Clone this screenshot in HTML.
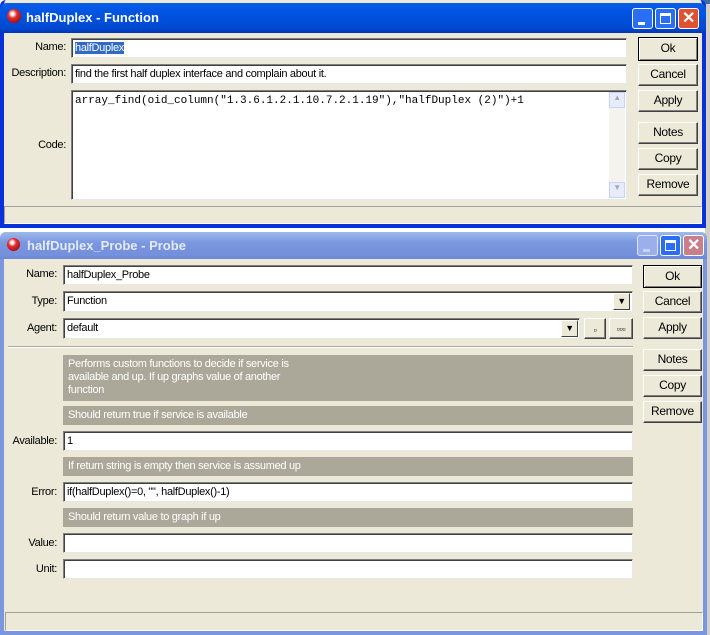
<!DOCTYPE html>
<html><head><meta charset="utf-8"><style>
*{box-sizing:border-box;margin:0;padding:0}
body{width:710px;height:635px;overflow:hidden;background:#fff;font-family:"Liberation Sans",sans-serif;font-size:11px;position:relative;letter-spacing:-0.3px}
.a{position:absolute}
.win{position:absolute;background:#ece9d8}
.field{position:absolute;background:#fff;border-top:1px solid #7f7f7f;border-left:1px solid #7f7f7f;border-bottom:1px solid #e8e8e8;border-right:1px solid #e8e8e8;box-shadow:inset 1px 1px 0 #404040;padding:3px 3px 0;line-height:13px;white-space:nowrap;overflow:hidden;color:#000}
.lbl{position:absolute;text-align:right;color:#000}
.btn{position:absolute;background:#ece9d8;border:1px solid #fff;border-right-color:#404040;border-bottom-color:#404040;box-shadow:inset -1px -1px 0 #808080;text-align:center;font-size:12px}
.gray{position:absolute;background:#aca899;color:#fff;padding:3px 5px;font-size:11px;line-height:13px}
.tb{position:absolute;border-radius:3px;border:1px solid #fff}
.status{position:absolute;border:1px solid #a0a0a0;border-right-color:#fff;border-bottom-color:#fff}
</style></head><body>
<div class="a" style="left:705px;top:0;width:5px;height:635px;background:#d4d0c8"></div>
<div class="a" style="left:350px;top:0;width:360px;height:4px;background:#3a6ea5"></div>

<!-- Window 1 -->
<div class="win" style="left:0;top:0;width:706px;height:228px;border:4px solid #0831d9;border-top:none;border-radius:6px 6px 0 0"></div>
<div class="a" style="left:0;top:3px;width:706px;height:30px;background:linear-gradient(#0a5fe8,#0054e3 30%,#0049d0 85%,#0036b0);border-radius:7px 7px 0 0"></div>
<div class="a" style="left:7px;top:9px;width:14px;height:14px;border-radius:50%;background:radial-gradient(circle at 40% 35%,#fff 10%,#e03030 35%,#900 90%)"></div>
<div class="a" style="left:26px;top:10px;color:#fff;font-weight:bold;font-size:13px;letter-spacing:0">halfDuplex - Function</div>
<div class="tb" style="left:632px;top:8px;width:21px;height:21px;background:#2a6ef5"><div class="a" style="left:5px;top:13px;width:7px;height:3px;background:#fff"></div></div>
<div class="tb" style="left:655px;top:8px;width:21px;height:21px;background:#2a6ef5"><div class="a" style="left:4px;top:4px;width:11px;height:11px;border:1px solid #fff;border-top-width:3px"></div></div>
<div class="tb" style="left:678px;top:8px;width:21px;height:21px;background:#e0522f;color:#fff;font-size:16px;font-weight:bold;text-align:center;line-height:19px">✕</div>

<div class="lbl" style="left:0;top:41px;width:66px">Name:</div>
<div class="field" style="left:71px;top:38px;width:556px;height:20px"><span style="background:#316ac5;color:#fff">halfDuplex</span></div>
<div class="lbl" style="left:0;top:67px;width:66px">Description:</div>
<div class="field" style="left:71px;top:64px;width:556px;height:20px">find the first half duplex interface and complain about it.</div>
<div class="lbl" style="left:0;top:139px;width:66px">Code:</div>
<div class="field" style="left:71px;top:90px;width:556px;height:110px;font-family:'Liberation Mono',monospace;font-size:11px;letter-spacing:0;padding-top:4px">array_find(oid_column("1.3.6.1.2.1.10.7.2.1.19"),"halfDuplex (2)")+1</div>
<div class="a" style="left:609px;top:92px;width:16px;height:106px;background:#f4f3ee"></div>
<div class="a" style="left:609px;top:92px;width:16px;height:16px;background:#e8ecf8;border:1px solid #c3d3fd;color:#a0a8c0;font-size:8px;text-align:center">▲</div>
<div class="a" style="left:609px;top:182px;width:16px;height:16px;background:#e8ecf8;border:1px solid #c3d3fd;color:#a0a8c0;font-size:8px;text-align:center">▼</div>

<div class="btn" style="left:638px;top:37px;width:60px;height:24px;line-height:21px;border:1px solid #000;box-shadow:inset 1px 1px 0 #fff,inset -1px -1px 0 #808080">Ok</div>
<div class="btn" style="left:638px;top:64px;width:60px;height:22px;line-height:19px">Cancel</div>
<div class="btn" style="left:638px;top:90px;width:60px;height:22px;line-height:19px">Apply</div>
<div class="btn" style="left:638px;top:122px;width:60px;height:22px;line-height:19px">Notes</div>
<div class="btn" style="left:638px;top:148px;width:60px;height:22px;line-height:19px">Copy</div>
<div class="btn" style="left:638px;top:174px;width:60px;height:22px;line-height:19px">Remove</div>
<div class="status" style="left:4px;top:206px;width:698px;height:18px"></div>

<!-- Window 2 -->
<div class="win" style="left:0;top:232px;width:707px;height:403px;border:4px solid #7a96df;border-top:none;border-radius:6px 6px 0 0"></div>
<div class="a" style="left:0;top:232px;width:707px;height:27px;background:linear-gradient(#9db9eb,#7a96df 40%,#7590dc 85%,#6b86d6);border-radius:7px 7px 0 0"></div>
<div class="a" style="left:7px;top:238px;width:13px;height:13px;border-radius:50%;background:radial-gradient(circle at 40% 35%,#fff 10%,#e03030 35%,#900 90%)"></div>
<div class="a" style="left:27px;top:238px;color:#e4eaf8;font-weight:bold;font-size:13px;letter-spacing:0">halfDuplex_Probe - Probe</div>
<div class="tb" style="left:637px;top:235px;width:21px;height:21px;background:#9bb0ea;border-color:#dbe4f8"><div class="a" style="left:5px;top:13px;width:7px;height:3px;background:#c8d4f4"></div></div>
<div class="tb" style="left:660px;top:235px;width:21px;height:21px;background:#2a6ef5"><div class="a" style="left:4px;top:4px;width:11px;height:11px;border:1px solid #fff;border-top-width:3px"></div></div>
<div class="tb" style="left:683px;top:235px;width:21px;height:21px;background:#c87f8c;color:#fff;font-size:16px;font-weight:bold;text-align:center;line-height:19px">✕</div>

<div class="lbl" style="left:0;top:268px;width:57px">Name:</div>
<div class="field" style="left:63px;top:265px;width:570px;height:20px">halfDuplex_Probe</div>
<div class="lbl" style="left:0;top:295px;width:57px">Type:</div>
<div class="field" style="left:63px;top:291px;width:570px;height:21px">Function</div>
<div class="a" style="left:613px;top:293px;width:17px;height:17px;background:#ece9d8;border:1px solid #fff;border-right-color:#404040;border-bottom-color:#404040;font-size:9px;text-align:center;line-height:15px">▼</div>
<div class="lbl" style="left:0;top:322px;width:57px">Agent:</div>
<div class="field" style="left:63px;top:318px;width:517px;height:21px">default</div>
<div class="a" style="left:561px;top:320px;width:17px;height:17px;background:#ece9d8;border:1px solid #fff;border-right-color:#404040;border-bottom-color:#404040;font-size:9px;text-align:center;line-height:15px">▼</div>
<div class="btn" style="left:584px;top:318px;width:22px;height:21px;font-size:9px;line-height:22px">▫</div>
<div class="btn" style="left:609px;top:318px;width:24px;height:21px;font-size:9px;line-height:20px;font-weight:bold">▫▫▫</div>
<div class="a" style="left:8px;top:346px;width:625px;height:2px;border-top:1px solid #aca899;border-bottom:1px solid #fff"></div>

<div class="gray" style="left:63px;top:355px;width:570px;height:46px">Performs custom functions to decide if service is<br>available and up. If up graphs value of another<br>function</div>
<div class="gray" style="left:63px;top:406px;width:570px;height:19px">Should return true if service is available</div>
<div class="lbl" style="left:0;top:435px;width:57px">Available:</div>
<div class="field" style="left:63px;top:431px;width:570px;height:20px">1</div>
<div class="gray" style="left:63px;top:457px;width:570px;height:19px">If return string is empty then service is assumed up</div>
<div class="lbl" style="left:0;top:486px;width:57px">Error:</div>
<div class="field" style="left:63px;top:482px;width:570px;height:20px">if(halfDuplex()=0, "", halfDuplex()-1)</div>
<div class="gray" style="left:63px;top:508px;width:570px;height:19px">Should return value to graph if up</div>
<div class="lbl" style="left:0;top:537px;width:57px">Value:</div>
<div class="field" style="left:63px;top:533px;width:570px;height:20px"></div>
<div class="lbl" style="left:0;top:563px;width:57px">Unit:</div>
<div class="field" style="left:63px;top:559px;width:570px;height:20px"></div>

<div class="btn" style="left:643px;top:265px;width:59px;height:23px;line-height:20px;border:1px solid #000;box-shadow:inset 1px 1px 0 #fff,inset -1px -1px 0 #808080">Ok</div>
<div class="btn" style="left:643px;top:291px;width:59px;height:22px;line-height:19px">Cancel</div>
<div class="btn" style="left:643px;top:317px;width:59px;height:22px;line-height:19px">Apply</div>
<div class="btn" style="left:643px;top:349px;width:59px;height:22px;line-height:19px">Notes</div>
<div class="btn" style="left:643px;top:375px;width:59px;height:22px;line-height:19px">Copy</div>
<div class="btn" style="left:643px;top:401px;width:59px;height:22px;line-height:19px">Remove</div>
<div class="status" style="left:5px;top:612px;width:698px;height:19px"></div>
</body></html>
